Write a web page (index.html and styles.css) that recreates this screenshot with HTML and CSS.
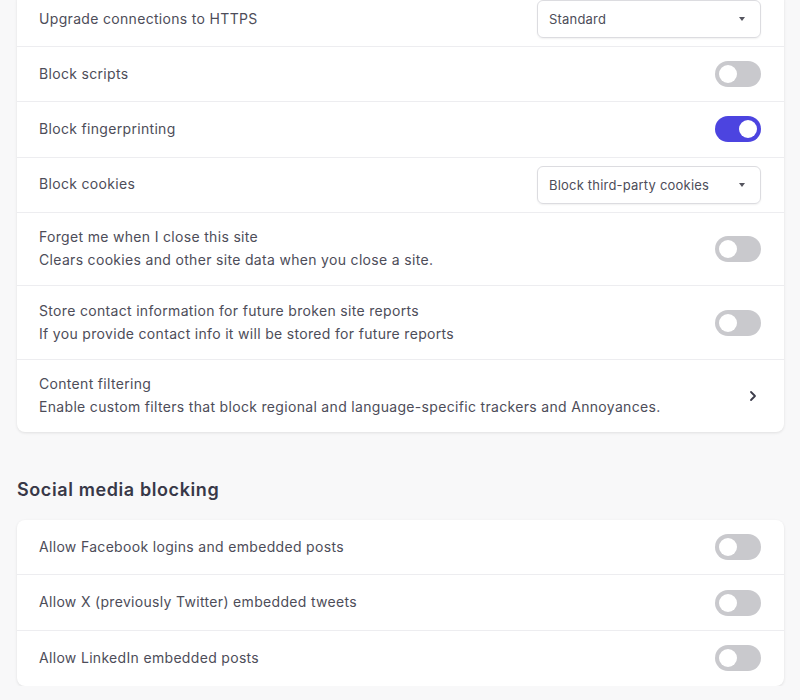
FILE: index.html
```html
<!DOCTYPE html>
<html lang="en">
<head>
  <meta charset="UTF-8" />
  <meta name="viewport" content="width=device-width, initial-scale=1" />
  <title>Shields settings</title>
  <link rel="stylesheet" href="styles.css">
</head>
<body>
  <div id="page">
    <div class="card">
      <div class="row">
        <div class="label">Upgrade connections to HTTPS</div>
        <div class="select"><span>Standard</span><span class="caret"></span></div>
      </div>
      <div class="row">
        <div class="label">Block scripts</div>
        <div class="toggle"></div>
      </div>
      <div class="row">
        <div class="label">Block fingerprinting</div>
        <div class="toggle on"></div>
      </div>
      <div class="row">
        <div class="label">Block cookies</div>
        <div class="select"><span>Block third-party cookies</span><span class="caret"></span></div>
      </div>
      <div class="row tall">
        <div class="label">
          Forget me when I close this site
          <div class="desc">Clears cookies and other site data when you close a site.</div>
        </div>
        <div class="toggle"></div>
      </div>
      <div class="row tall">
        <div class="label">
          Store contact information for future broken site reports
          <div class="desc">If you provide contact info it will be stored for future reports</div>
        </div>
        <div class="toggle"></div>
      </div>
      <div class="row tall">
        <div class="label">
          Content filtering
          <div class="desc">Enable custom filters that block regional and language-specific trackers and Annoyances.</div>
        </div>
        <svg class="chevron" width="10" height="12" viewBox="0 0 10 12">
          <path d="M3 2 L7 6 L3 10" fill="none" stroke="#3b3b4a" stroke-width="1.8" stroke-linecap="round" stroke-linejoin="round"/>
        </svg>
      </div>
    </div>

    <h2>Social media blocking</h2>

    <div class="card">
      <div class="row">
        <div class="label">Allow Facebook logins and embedded posts</div>
        <div class="toggle"></div>
      </div>
      <div class="row">
        <div class="label">Allow X (previously Twitter) embedded tweets</div>
        <div class="toggle"></div>
      </div>
      <div class="row">
        <div class="label">Allow LinkedIn embedded posts</div>
        <div class="toggle"></div>
      </div>
    </div>
  </div>
</body>
</html>
```

FILE: styles.css
```css
body {
  font-family: Inter, "Noto Sans", sans-serif;
  background: #f8f8f9;
  margin: 0;
  color: #4d4d59;
  overflow: hidden;
}
#page {
  margin: -8.33px 16px 0 17px;
}
.card {
  background: #fff;
  border-radius: 8px;
  box-shadow: 0 1px 3px rgba(0,0,0,0.1);
}
.row {
  display: flex;
  align-items: center;
  justify-content: space-between;
  min-height: 55.33px;
  padding: 0 23px 0 22px;
  border-bottom: 1px solid #ededf0;
  box-sizing: border-box;
  font-size: 14px;
  letter-spacing: 0.32px;
}
.row:last-child {
  border-bottom: none;
}
.row.tall {
  padding-top: 13.5px;
  padding-bottom: 13.5px;
}
.label {
  line-height: 22.67px;
}
.desc {
  line-height: 22.67px;
}
.select {
  width: 224px;
  height: 38px;
  box-sizing: border-box;
  border: 1px solid #dcdce0;
  border-radius: 6px;
  box-shadow: 0 1px 2px rgba(0,0,0,0.06);
  display: flex;
  align-items: center;
  justify-content: space-between;
  padding: 0 15px 0 11px;
  font-size: 13px;
  letter-spacing: 0.2px;
}
.caret {
  width: 0;
  height: 0;
  border-left: 3.5px solid transparent;
  border-right: 3.5px solid transparent;
  border-top: 4px solid #55555f;
}
.toggle {
  width: 46px;
  height: 26px;
  border-radius: 13px;
  background: #c9c9cd;
  position: relative;
  flex-shrink: 0;
}
.toggle::after {
  content: "";
  position: absolute;
  top: 4px;
  left: 4px;
  width: 18px;
  height: 18px;
  border-radius: 50%;
  background: #fff;
}
.toggle.on {
  background: #4c44e0;
}
.toggle.on::after {
  left: 24px;
}
.chevron {
  margin-right: 3px;
}
h2 {
  font-size: 18px;
  font-weight: 600;
  letter-spacing: 0.6px;
  color: #383848;
  margin: 47px 0 19px;
  line-height: 22px;
}
```
